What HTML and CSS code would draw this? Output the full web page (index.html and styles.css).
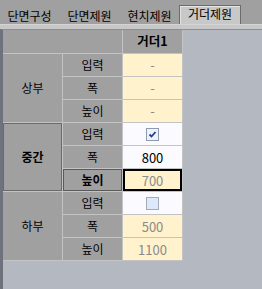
FILE: index.html
```html
<!DOCTYPE html>
<html lang="ko">
<head>
<meta charset="utf-8">
<link rel="stylesheet" href="styles.css">
</head>
<body>
<div class="tabs">
  <div class="tab t1">단면구성</div>
  <div class="tab t2">단면제원</div>
  <div class="tab t3">현치제원</div>
  <div class="tab t4 active">거더제원</div>
</div>
<div class="strip"></div>
<div class="content">
  <div class="grid">
    <div class="cell head corner"></div>
    <div class="cell head colhead">거더1</div>

    <div class="cell head group g1">상부</div>
    <div class="cell head label">입력</div>
    <div class="cell val yellow dim">-</div>
    <div class="cell head label">폭</div>
    <div class="cell val yellow dim">-</div>
    <div class="cell head label">높이</div>
    <div class="cell val yellow dim">-</div>

    <div class="cell head group g2 sel">중간</div>
    <div class="cell head label">입력</div>
    <div class="cell val white"><span class="chk checked"><svg viewBox="0 0 11 11" width="11" height="11"><path d="M2.5 5.5 L4.5 7.5 L8.5 3" fill="none" stroke="#1f3f8f" stroke-width="1.8"/></svg></span></div>
    <div class="cell head label">폭</div>
    <div class="cell val white">800</div>
    <div class="cell head label cur">높이</div>
    <div class="cell val yellow dim focus">700</div>

    <div class="cell head group g3">하부</div>
    <div class="cell head label">입력</div>
    <div class="cell val white"><span class="chk"></span></div>
    <div class="cell head label">폭</div>
    <div class="cell val yellow dim">500</div>
    <div class="cell head label">높이</div>
    <div class="cell val yellow dim">1100</div>
  </div>
</div>
</body>
</html>
```

FILE: styles.css
```css
* { box-sizing: border-box; }
html, body {
  margin: 0;
  padding: 0;
  width: 262px;
  height: 289px;
  overflow: hidden;
  font-family: "Noto Sans CJK KR", "Noto Sans", sans-serif;
  font-size: 12px;
  color: #000;
  background: #b4b8c1;
}
.tabs {
  height: 24px;
  background: #a0a0a0;
  display: flex;
  align-items: flex-end;
}
.tab {
  height: 19px;
  display: flex;
  justify-content: center;
  align-items: center;
  padding-top: 3px;
  line-height: 1;
}
.t1 { width: 59px; }
.t2 { width: 61px; }
.t3 { width: 59px; }
.t4 { width: 62px; }
.tab.active {
  background: #c8c8c8;
  border: 1px solid #6c6c6c;
  border-bottom: none;
  box-shadow: inset 1px 1px 0 #e4e4e4;
  padding-top: 0;
  padding-bottom: 2px;
}
.strip {
  height: 5px;
  background: #c8c8c8;
  border-top: 1px solid #d4d4d4;
}
.content {
  height: 260px;
  border-top: 1px solid #8a8e9c;
  border-left: 3px solid #6e727d;
  padding-top: 0;
}
.grid {
  display: grid;
  grid-template-columns: 59px 59px 59px;
  grid-template-rows: 23px repeat(9, 22px);
  gap: 1px;
  padding: 0 1px 1px 0;
  background: #c3c3c3;
  width: 180px;
}
.cell {
  display: flex;
  align-items: center;
  justify-content: center;
  line-height: 1;
}
.head { background: #a0a0a0; }
.corner { grid-column: 1 / span 2; }
.colhead { font-weight: bold; font-size: 12.5px; }
.group { grid-column: 1; }
.g1 { grid-row: 2 / span 3; }
.g2 { grid-row: 5 / span 3; }
.g3 { grid-row: 8 / span 3; }
.sel {
  font-weight: bold;
  border: 1px solid #6a6a6a;
}
.cur {
  font-weight: bold;
  border: 1px solid #5a5a5a;
}
.label { grid-column: 2; }
.val { grid-column: 3; font-size: 13px; }
.yellow { background: #fff2cc; }
.white { background: #fbfaff; }
.dim { color: #8a8a8a; }
.focus { border: 2px solid #000; }
.chk {
  width: 13px;
  height: 13px;
  border: 1px solid #a3abbb;
  background: #dde8fb;
  display: flex;
  align-items: center;
  justify-content: center;
}
.chk.checked { background: #eef2fa; border-color: #8e9ab0; }
```
